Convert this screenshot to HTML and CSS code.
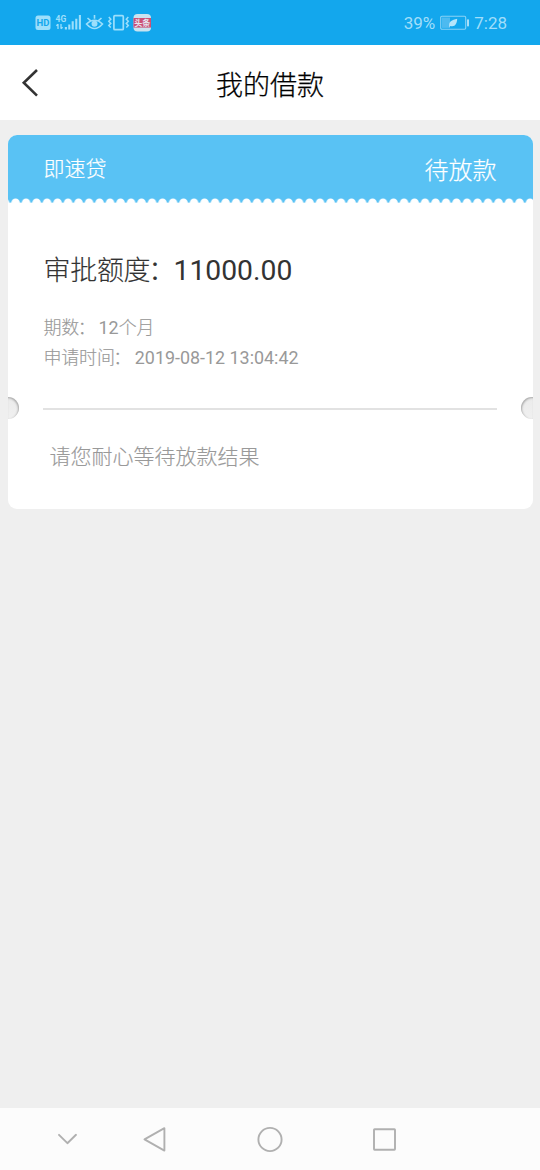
FILE: index.html
```html
<!DOCTYPE html>
<html lang="zh-CN">
<head>
<meta charset="utf-8">
<title>我的借款</title>
<link rel="stylesheet" href="styles.css">
</head>
<body>
<div class="status">
  <div class="status-left">
    <svg width="120" height="20" viewBox="0 0 120 20" fill="none" stroke="#9ddffb">
      <rect x="0.5" y="3.5" width="15" height="14.5" rx="2.5" fill="#9ddffb" stroke="none"/>
      <text x="8" y="14.3" class="hd">HD</text>
      <text x="20.5" y="9.5" class="fourg">4G</text>
      <path d="M23 12v5M21.4 13.8l1.6-1.6M26 12v4.8M26 16.8l1.6-1.6" stroke-width="1.3"/>
      <path d="M30.9 17.5v-2.6M34.3 17.5v-5M37.7 17.5V9.3M41.3 17.5V6.8M44.9 17.5V3" stroke-width="2.1"/>
      <path d="M51.5 12q8-7.5 16 0q-8 9-16 0zM52.5 6l3 2.6M59.5 3v3.8M66.5 6l-3 2.6" stroke-width="1.6"/>
      <circle cx="59.5" cy="11.8" r="3" fill="#9ddffb" stroke="none"/>
      <rect x="78.9" y="3.7" width="9.4" height="14" rx="1" stroke-width="1.7"/>
      <path d="M73.8 5l2 2.2-2 2 2 2.2-2 2 2 2.2M93.3 5l-2 2.2 2 2-2 2.2 2 2-2 2.2" stroke-width="1.5"/>
      <rect x="98.5" y="2" width="17.5" height="17.5" rx="4" fill="#c9e3f0" stroke="none"/>
      <rect x="98.5" y="6" width="17.5" height="9.6" fill="#cc4f75" stroke="none"/>
      <text x="107.3" y="13.9" class="news">头条</text>
    </svg>
  </div>
  <div class="status-right">
    <span>39%</span>
    <svg width="30" height="16" viewBox="0 0 30 16">
      <rect x="0.7" y="1.2" width="25" height="13" rx="1.2" fill="none" stroke="#8ad2f5" stroke-width="1.1"/>
      <rect x="2" y="2.5" width="8" height="10.4" fill="#4dbaf0"/>
      <path d="M9.3 12.2C8.2 6.5 12 5 17.2 3.8C17 8.8 15 12.4 10.4 11L9.3 12.6z" fill="#b5e5fb"/>
      <rect x="27" y="4.2" width="2" height="7.4" rx=".8" fill="#a8dff9"/>
    </svg>
    <span>7:28</span>
  </div>
</div>
<header class="header">
  <svg class="back" width="20" height="32" viewBox="0 0 20 32"><path d="M17 3L3.8 15.8L17 28.6" fill="none" stroke="#333" stroke-width="2.6"/></svg>
  <h1 class="title">我的借款</h1>
</header>
<main class="main">
  <section class="card">
    <div class="card-head">
      <span class="product">即速贷</span>
      <span class="state">待放款</span>
    </div>
    <svg class="perforation" width="525" height="5">
      <defs>
        <pattern id="scallop" x="2.3" width="10.5" height="5" patternUnits="userSpaceOnUse">
          <circle cx="5.25" cy="4.7" r="4.2" fill="#fff"/>
          <rect y="4.6" width="10.5" height="1" fill="#fff"/>
        </pattern>
      </defs>
      <rect width="525" height="5" fill="#59c2f4"/>
      <rect width="525" height="5" fill="url(#scallop)"/>
    </svg>
    <div class="details">
      <div class="amount"><span class="amount-label">审批额度<span class="colon">：</span></span><span class="amount-value">11000.00</span></div>
      <div class="row"><span class="row-label term">期数<span class="colon">：</span></span><span class="row-value">12<span class="unit">个月</span></span></div>
      <div class="row"><span class="row-label applied">申请时间<span class="colon">：</span></span><span class="row-value">2019-08-12 13:04:42</span></div>
    </div>
    <div class="divider">
      <span class="notch"></span>
      <span class="line"></span>
      <span class="notch notch-right"></span>
    </div>
    <p class="message">请您耐心等待放款结果</p>
  </section>
</main>
<nav class="nav">
  <svg width="540" height="62" viewBox="0 0 540 62" fill="none" stroke="#b0b0b0" stroke-width="1.9" stroke-linejoin="round" stroke-linecap="round">
    <path d="M59 26.8L67.4 35.2L76 26.8"/>
    <path d="M164.4 20.2V42.6L144.5 31.4z"/>
    <circle cx="270" cy="31.5" r="11.6"/>
    <rect x="374" y="21.2" width="21" height="20.5" rx=".6"/>
  </svg>
</nav>
</body>
</html>
```
FILE: styles.css
```css
* { box-sizing: border-box; }
body {
  margin: 0;
  height: 1170px;
  display: flex;
  flex-direction: column;
  background: #efefef;
  font-family: Roboto, "Noto Sans CJK SC", sans-serif;
  overflow: hidden;
}
svg { display: block; flex: none; }
.status {
  height: 45px;
  background: #13a7ed;
  display: flex;
  justify-content: space-between;
  padding: 0 33px 0 35px;
}
.status-left { padding-top: 12px; }
.status-right {
  display: flex;
  align-items: center;
  gap: 4.5px;
  padding-top: 1px;
  color: #a1defa;
  font-size: 17px;
}
.hd, .news { text-anchor: middle; stroke: none; }
.hd { font: bold 9.5px Roboto, sans-serif; fill: #13a7ed; }
.fourg { font: bold 8.5px Roboto, sans-serif; fill: #9ddffb; stroke: none; }
.news { font: bold 8px "Noto Sans CJK SC", sans-serif; fill: #e5e9f2; }
.header {
  height: 75px;
  background: #fff;
  display: grid;
  grid-template-columns: 60px 1fr 60px;
  align-items: center;
}
.back { margin-left: 20px; }
.title {
  margin: 0;
  padding-top: 6px;
  text-align: center;
  font-size: 27px;
  font-weight: 300;
  -webkit-text-stroke: 0.25px #000;
  line-height: 40px;
  color: #000;
}
.main { flex: 1; padding: 15px 7.5px 0; }
.card {
  height: 373.5px;
  border-radius: 9px;
  background: #fff;
  overflow: hidden;
}
.card-head {
  height: 63px;
  padding: 0 36px;
  display: flex;
  justify-content: space-between;
  background: #59c2f4;
  color: #fff;
  font-weight: 300;
  -webkit-text-stroke: 0.2px #fff;
}
.product { font-size: 21px; line-height: 68px; }
.state { font-size: 24px; line-height: 72px; }
.details { height: 193px; padding: 48px 36px 0; color: #999; }
.amount {
  display: flex;
  height: 61.5px;
  font-size: 27px;
  line-height: 40px;
  color: #333;
}
.amount-label {
  width: 130px;
  font-weight: 300;
  letter-spacing: -0.3px;
  -webkit-text-stroke: 0.15px #333;
  white-space: nowrap;
}
.amount-value { font-size: 28.3px; }
.colon { margin-left: -0.08em; }
.row {
  display: flex;
  height: 30.5px;
  font-size: 18px;
  line-height: 30px;
}
.row-label {
  flex: none;
  white-space: nowrap;
  letter-spacing: -0.2px;
  font-weight: 300;
  -webkit-text-stroke: 0.15px #999;
}
.term { width: 55px; }
.applied { width: 91.3px; }
.row-value { font-size: 17.9px; }
.unit { font-weight: 300; -webkit-text-stroke: 0.15px #999; }
.divider {
  height: 24px;
  display: flex;
  align-items: center;
  justify-content: space-between;
}
.notch {
  width: 11.5px;
  height: 22.5px;
  border-radius: 0 12px 12px 0;
  background: linear-gradient(#ebebeb, #f0f0f0);
  box-shadow: inset -1px 1px 2px #aaa;
}
.notch-right {
  border-radius: 12px 0 0 12px;
  box-shadow: inset 1px 1px 2px #aaa;
}
.line { width: 454px; height: 2px; margin-top: 1px; background: #e2e2e2; }
.message {
  margin: 0;
  padding: 20px 0 0 42px;
  font-size: 21px;
  line-height: 34px;
  font-weight: 300;
  -webkit-text-stroke: 0.15px #999;
  color: #999;
}
.nav { height: 62px; background: #fcfcfc; }
```
